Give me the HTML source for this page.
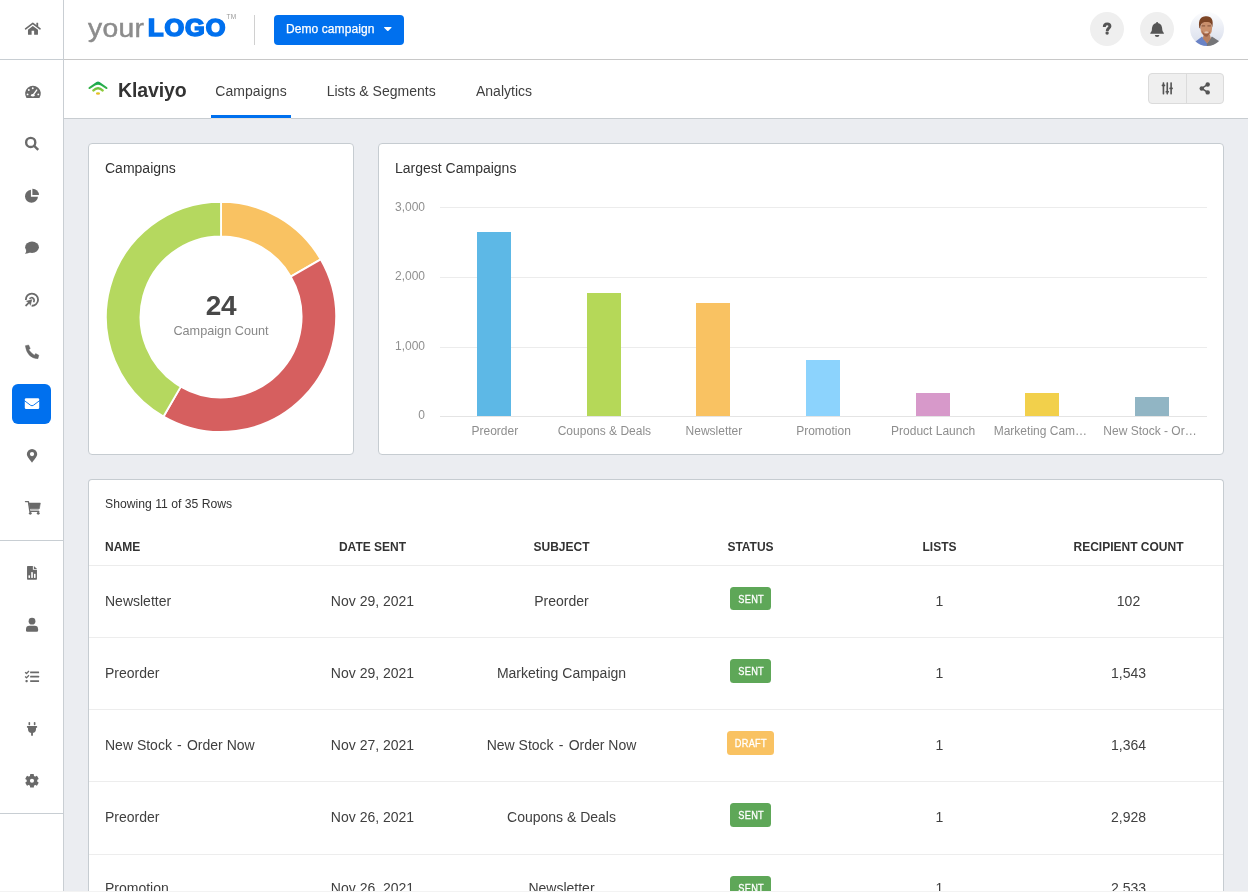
<!DOCTYPE html>
<html lang="en">
<head>
<meta charset="utf-8">
<title>Klaviyo - Campaigns</title>
<style>
*{box-sizing:border-box;margin:0;padding:0}
html,body{width:1248px;height:892px;overflow:hidden;background:#ebedf1}
#sidebar,#topbar,#subbar,main{will-change:transform}
body{font-family:"Liberation Sans",sans-serif;font-size:14px;color:#333;position:relative}
.ic{position:absolute;display:block}
#sidebar{position:absolute;left:0;top:0;width:64px;height:892px;background:#fff;border-right:1px solid #c9ced3}
#sidebar .sep{position:absolute;left:0;width:63px;height:1px;background:#c8ced3}
#sidebar .active{position:absolute;left:12px;top:384px;width:39px;height:40px;border-radius:6px;background:#0070ee}
#topbar{position:absolute;left:64px;top:0;width:1184px;height:60px;background:#fff;border-bottom:1px solid #c8c8c8}
#logo{position:absolute;left:0;top:0;width:190px;height:59px}
#logo span{position:absolute;white-space:nowrap;line-height:1}
#logo .your{left:24px;top:15.7px;font-size:25px;color:#8c8c8c;letter-spacing:.3px;-webkit-text-stroke:.45px #8c8c8c;transform:scaleX(1.13);transform-origin:0 0}
#logo .logo{left:84.3px;top:16.9px;font-size:23.2px;font-weight:bold;color:#0070ee;letter-spacing:.9px;-webkit-text-stroke:1.7px #0070ee;transform:scaleX(1.09);transform-origin:0 0}
#logo .tm{left:162.5px;top:14px;font-size:6.5px;color:#999;letter-spacing:.2px}
#topbar .vsep{position:absolute;left:190px;top:15px;width:1px;height:30px;background:#d0d0d0}
#campaign{position:absolute;left:210px;top:15px;width:130px;height:30px;border-radius:4px;background:#0070ee;color:#fff;font-size:12px;line-height:29px;padding-left:12px;letter-spacing:.08px;-webkit-text-stroke:.25px #fff}
.circ{position:absolute;top:12px;width:34px;height:34px;border-radius:50%;background:#efefef}
#subbar{position:absolute;left:64px;top:60px;width:1184px;height:59px;background:#fff;border-bottom:1px solid #c8cdd1}
#subbar h1{position:absolute;left:54px;top:18.4px;font-size:19.5px;line-height:24px;font-weight:bold;color:#333;letter-spacing:-.1px}
#subbar nav a{position:absolute;top:21px;font-size:14px;line-height:20px;color:#404040;text-decoration:none;white-space:nowrap}
#subbar .ul{position:absolute;left:147px;top:55px;width:80px;height:4px;background:#0070ee;border-bottom:1px solid #e4e1dc}
#tools{position:absolute;left:1084px;top:13px;width:76px;height:31px;border:1px solid #dbdbdb;border-radius:4px;background:#efefef}
#tools i{position:absolute;left:37px;top:0;width:1px;height:29px;background:#dbdbdb}
.card{position:absolute;background:#fff;border:1px solid #c6ccd1;border-radius:4px}
.card h2{position:absolute;left:16px;top:16px;font-size:14px;line-height:16px;font-weight:normal;color:#333}
.grid{position:absolute;left:440px;width:767px;height:1px;background:#ececec}
.grid.base{background:#e4e4e4}
.yl{position:absolute;left:380px;width:45px;text-align:right;font-size:12px;line-height:18px;color:#909090}
.xl{position:absolute;top:422px;width:120px;text-align:center;font-size:12px;line-height:18px;color:#8e8e8e;white-space:nowrap}
.bar{position:absolute;width:34px}
#dc{position:absolute;left:0;top:0}
.num{position:absolute;left:89px;top:289.6px;width:264px;text-align:center;font-size:28px;line-height:32px;font-weight:bold;color:#484848;letter-spacing:-.4px}
.cap{position:absolute;left:89px;top:321.6px;width:264px;text-align:center;font-size:12.7px;line-height:18px;color:#888}
#tcard{left:88px;top:479px;width:1136px;height:440px;border-bottom:none}
#tcard p{position:absolute;left:16px;top:15px;font-size:12.2px;line-height:18px;color:#333}
table{position:absolute;left:0;top:48px;width:1134px;border-collapse:collapse;table-layout:fixed}
th{height:37px;font-size:12px;font-weight:bold;color:#333;text-align:center;border-bottom:1px solid #ececec;vertical-align:middle;padding-top:2px}
td{height:72px;font-size:14px;color:#404040;text-align:center;border-bottom:1px solid #ededed;vertical-align:middle}
tr.r4 td{height:73px;padding-bottom:1px}
tr.r5 td{padding-bottom:3.4px}
th:first-child,td:first-child{text-align:left;padding-left:16px}
.badge{display:inline-block;height:23px;line-height:23px;border-radius:3.5px;font-size:10.6px;color:#fff;position:relative;top:-3px;text-align:center;white-space:nowrap}
.badge b{display:inline-block;font-weight:normal;-webkit-text-stroke:.3px #fff;transform:scaleX(.87);transform-origin:50% 50%;margin:0 -4px;position:relative;top:1px;letter-spacing:.35px;text-indent:.35px}
tr.r2 .badge,tr.r3 .badge,tr.r4 .badge{height:24px;top:-2.5px}
tr.r5 .badge{top:-1px}
.sent{background:#5ea758;width:41px}
.draft{background:#f9c262;width:47px}
#edge{position:absolute;left:0;top:891px;width:1248px;height:1px;background:#f3f3f3}
.hy{padding:0 1.3px}
</style>
</head>
<body>
<aside id="sidebar">
<div class="sep" style="top:59px"></div>
<div class="sep" style="top:540px"></div>
<div class="sep" style="top:813px"></div>
<div class="active"></div>
<svg class="ic" style="left:18px;top:15px" width="30" height="28" viewBox="0 0 956 892"><path fill="none" stroke="#6a6a6a" stroke-width="52" stroke-linecap="round" stroke-linejoin="round" d="M242 440L472 264L702 440"/><rect x="585" y="246" width="58" height="130" rx="8" fill="#6a6a6a"/><path fill="#6a6a6a" d="M318 470L472 352L636 470V615A18 18 0 0 1 618 633H514V505H434V633H336A18 18 0 0 1 318 615Z"/></svg>
<svg class="ic" style="left:18px;top:78px" width="30" height="28" viewBox="0 0 956 892"><path fill="#6a6a6a" d="M270 636A250 250 0 1 1 684 636Z"/><circle cx="345" cy="383" r="30" fill="#fff"/><circle cx="470" cy="325" r="30" fill="#fff"/><circle cx="305" cy="522" r="30" fill="#fff"/><circle cx="647" cy="522" r="30" fill="#fff"/><path fill="none" stroke="#fff" stroke-width="44" stroke-linecap="round" d="M490 530L596 384"/><ellipse cx="472" cy="548" rx="58" ry="38" fill="#fff"/></svg>
<svg class="ic" style="left:18px;top:130px" width="30" height="28" viewBox="0 0 956 892"><circle cx="405" cy="395" r="146" fill="none" stroke="#6a6a6a" stroke-width="76"/><path fill="none" stroke="#6a6a6a" stroke-width="74" d="M515 505L645 635"/></svg>
<svg class="ic" style="left:18px;top:182px" width="30" height="28" viewBox="0 0 956 892"><path fill="#6a6a6a" d="M412 466V250A207 207 0 1 0 636 466Z"/><path fill="#6a6a6a" d="M458 416V213A203 203 0 0 1 668 416Z"/></svg>
<svg class="ic" style="left:18px;top:234px" width="30" height="28" viewBox="0 0 956 892"><ellipse cx="447" cy="420" rx="220" ry="182" fill="#6a6a6a"/><path fill="#6a6a6a" d="M262 500Q270 580 224 628Q320 632 400 575Z"/></svg>
<svg class="ic" style="left:18px;top:286px" width="30" height="28" viewBox="0 0 956 892"><path fill="none" stroke="#6a6a6a" stroke-width="58" d="M250 445A195 195 0 1 1 435 630"/><path fill="none" stroke="#6a6a6a" stroke-width="54" d="M368 405A82 82 0 1 1 492 512"/><path fill="#6a6a6a" stroke="#fff" stroke-width="10" stroke-linejoin="round" d="M462 412L240 480L312 522L218 615L262 660L355 566L400 640Z"/></svg>
<svg class="ic" style="left:18px;top:338px" width="30" height="28" viewBox="0 0 956 892"><path fill="#6a6a6a" stroke="#6a6a6a" stroke-width="14" stroke-linejoin="round" d="M234 246L338 222L390 338L342 378Q412 478 524 546L562 494L664 548L636 658Q292 648 234 246Z"/></svg>
<svg class="ic" style="left:18px;top:442px" width="30" height="28" viewBox="0 0 956 892"><path fill="#6a6a6a" fill-rule="evenodd" d="M447 662C400 590 282 480 282 385A165 165 0 1 1 612 385C612 480 494 590 447 662ZM447 317A68 68 0 1 0 447 453A68 68 0 1 0 447 317Z"/></svg>
<svg class="ic" style="left:18px;top:494px" width="30" height="28" viewBox="0 0 956 892"><path fill="none" stroke="#6a6a6a" stroke-width="42" stroke-linecap="round" stroke-linejoin="round" d="M238 240H332L378 552H665"/><path fill="#6a6a6a" stroke="#6a6a6a" stroke-width="20" stroke-linejoin="round" d="M350 290H712L680 468H378Z"/><rect x="400" y="480" width="262" height="50" fill="#b9b9b9"/><circle cx="392" cy="616" r="44" fill="#6a6a6a"/><circle cx="645" cy="616" r="44" fill="#6a6a6a"/></svg>
<svg class="ic" style="left:18px;top:558px" width="30" height="28" viewBox="0 0 956 892"><path fill="#6a6a6a" d="M310 256H474V378H604V670A22 22 0 0 1 582 692H310A22 22 0 0 1 288 670V278A22 22 0 0 1 310 256Z"/><path fill="#6a6a6a" d="M506 252L608 350H506Z"/><rect x="333" y="548" width="50" height="88" rx="14" fill="#fff"/><rect x="421" y="448" width="52" height="188" rx="14" fill="#fff"/><rect x="509" y="498" width="50" height="138" rx="14" fill="#fff"/></svg>
<svg class="ic" style="left:18px;top:610px" width="30" height="28" viewBox="0 0 956 892"><circle cx="447" cy="355" r="108" fill="#6a6a6a"/><path fill="#6a6a6a" d="M255 650V610A108 108 0 0 1 363 502H532A108 108 0 0 1 640 610V650A42 42 0 0 1 598 692H297A42 42 0 0 1 255 650Z"/></svg>
<svg class="ic" style="left:18px;top:662px" width="30" height="28" viewBox="0 0 956 892"><rect x="386" y="301" width="286" height="58" rx="12" fill="#6a6a6a"/><rect x="386" y="439" width="286" height="58" rx="12" fill="#6a6a6a"/><rect x="386" y="578" width="286" height="58" rx="12" fill="#6a6a6a"/><path fill="none" stroke="#6a6a6a" stroke-width="42" stroke-linejoin="round" d="M228 325L272 367L350 285"/><path fill="none" stroke="#6a6a6a" stroke-width="42" stroke-linejoin="round" d="M228 463L272 505L350 423"/><rect x="238" y="570" width="72" height="72" rx="24" fill="#6a6a6a"/></svg>
<svg class="ic" style="left:18px;top:714px" width="30" height="28" viewBox="0 0 956 892"><rect x="335" y="252" width="52" height="110" rx="24" fill="#6a6a6a"/><rect x="504" y="252" width="52" height="110" rx="24" fill="#6a6a6a"/><path fill="#6a6a6a" d="M300 383H594A16 16 0 0 1 610 399V425A16 16 0 0 1 594 441H574V478A128 128 0 0 1 318 478V441H300A16 16 0 0 1 284 425V399A16 16 0 0 1 300 383Z"/><rect x="418" y="580" width="58" height="112" fill="#6a6a6a"/></svg>
<svg class="ic" style="left:18px;top:766px" width="30" height="28" viewBox="0 0 956 892"><circle cx="445" cy="470" r="118" fill="none" stroke="#6a6a6a" stroke-width="104"/><rect x="383" y="252" width="124" height="90" rx="22" fill="#6a6a6a" transform="rotate(0 445 470)"/><rect x="383" y="252" width="124" height="90" rx="22" fill="#6a6a6a" transform="rotate(60 445 470)"/><rect x="383" y="252" width="124" height="90" rx="22" fill="#6a6a6a" transform="rotate(120 445 470)"/><rect x="383" y="252" width="124" height="90" rx="22" fill="#6a6a6a" transform="rotate(180 445 470)"/><rect x="383" y="252" width="124" height="90" rx="22" fill="#6a6a6a" transform="rotate(240 445 470)"/><rect x="383" y="252" width="124" height="90" rx="22" fill="#6a6a6a" transform="rotate(300 445 470)"/></svg>
<svg class="ic" style="left:8px;top:380px" width="48" height="48" viewBox="0 0 892 892"><rect x="312" y="340" width="268" height="200" rx="24" fill="#fff"/><path fill="none" stroke="#0070ee" stroke-width="17" stroke-linejoin="round" d="M300 380L420 470Q446 488 472 470L592 380"/></svg>
</aside>
<header id="topbar">
<div id="logo"><span class="your">your</span><span class="logo">LOGO</span><span class="tm">TM</span></div>
<div class="vsep"></div>
<div id="campaign">Demo campaign</div>
</header>
<div class="circ" style="left:1090px"></div>
<div class="circ" style="left:1140px"></div>
<svg class="ic" style="left:1184px;top:6px" width="46" height="46" viewBox="0 0 892 892"><defs><clipPath id="avc"><circle cx="447" cy="445" r="330"/></clipPath><linearGradient id="avg" x1="0" y1="0" x2="0" y2="1"><stop offset="0" stop-color="#fcfdfe"/><stop offset="0.5" stop-color="#e9ecf4"/><stop offset="1" stop-color="#d6dcea"/></linearGradient><filter id="avb" x="-20%" y="-20%" width="140%" height="140%"><feGaussianBlur stdDeviation="10"/></filter></defs><g clip-path="url(#avc)"><rect x="100" y="100" width="700" height="700" fill="url(#avg)"/><g filter="url(#avb)"><path fill="#6a83c6" d="M205 800V705L350 590L455 720V800Z"/><path fill="#747478" d="M445 800V720L540 590L690 690V800Z"/><path fill="#b98060" d="M380 560H505L520 630L450 725L365 630Z"/><ellipse cx="432" cy="435" rx="112" ry="152" fill="#c98f6c"/><path fill="#7d4426" d="M296 420C270 260 335 195 430 200C525 195 580 265 548 420C540 340 505 305 430 310C355 305 318 350 316 440Z"/><path fill="#7a4a38" opacity=".75" d="M345 372H410V398H345ZM455 372H520V398H455Z"/><path fill="#9a5f45" d="M350 470C375 565 485 565 510 470C505 545 475 592 432 595C388 592 355 545 350 470Z"/><ellipse cx="435" cy="508" rx="40" ry="13" fill="#e6d2c6"/></g></g></svg>
<svg class="ic" style="left:1088px;top:10px" width="88" height="38" viewBox="0 0 1248 539"><path fill="none" stroke="#555" stroke-width="42" d="M231 242C231 206 250 197 272 197C296 197 311 209 311 230C311 260 272 258 272 300"/><circle cx="271" cy="328" r="24" fill="#555"/></svg>
<svg class="ic" style="left:1088px;top:10px" width="88" height="38" viewBox="0 0 1248 539"><circle cx="980" cy="184" r="15" fill="#555"/><path fill="#555" d="M980 186C1042 186 1052 242 1054 282C1056 306 1078 320 1078 336L882 336C882 320 904 306 906 282C908 242 918 186 980 186Z"/><path fill="#555" d="M948 354H1012A32 30 0 0 1 948 354Z"/></svg>
<svg class="ic" style="left:384.3px;top:27.2px" width="7.6" height="4.2" viewBox="0.0 -896.0 1024.0 576.0" preserveAspectRatio="none" ><path transform="scale(1,-1)" fill="#fff" d="M1024 832q0 -26 -19 -45l-448 -448q-19 -19 -45 -19t-45 19l-448 448q-19 19 -19 45t19 45t45 19h896q26 0 45 -19t19 -45z"/></svg>
<section id="subbar">
<h1>Klaviyo</h1>
<nav><a style="left:151.2px;letter-spacing:.08px">Campaigns</a><a style="left:262.7px">Lists &amp; Segments</a><a style="left:412px">Analytics</a></nav>
<div class="ul"></div>
<div id="tools"><i></i></div>
</section>
<svg class="ic" style="left:1140px;top:66px" width="92" height="46" viewBox="0 0 1248 624"><rect x="307" y="222" width="22" height="164" rx="8" fill="#555"/><rect x="294" y="251" width="48" height="22" rx="6" fill="#555"/><rect x="359" y="222" width="22" height="164" rx="8" fill="#555"/><rect x="346" y="339" width="48" height="22" rx="6" fill="#555"/><rect x="411" y="222" width="22" height="164" rx="8" fill="#555"/><rect x="398" y="292" width="48" height="22" rx="6" fill="#555"/></svg><svg class="ic" style="left:1140px;top:66px" width="92" height="46" viewBox="0 0 1248 624"><path fill="none" stroke="#555" stroke-width="21" d="M918 250L838 305L918 358"/><circle cx="918" cy="250" r="30" fill="#555"/><circle cx="838" cy="305" r="30" fill="#555"/><circle cx="918" cy="358" r="30" fill="#555"/></svg>
<svg class="ic" style="left:82px;top:74px" width="32" height="28" viewBox="0 0 1019 892"><defs><linearGradient id="kg1" x1="0" y1="0" x2="0" y2="1"><stop offset="0" stop-color="#12a650"/><stop offset="1" stop-color="#3bb549"/></linearGradient><linearGradient id="kg2" x1="0" y1="0" x2="0" y2="1"><stop offset="0" stop-color="#5dbb46"/><stop offset="1" stop-color="#9bd03a"/></linearGradient><linearGradient id="kg3" x1="0" y1="0" x2="0" y2="1"><stop offset="0" stop-color="#c9cc2a"/><stop offset="0.6" stop-color="#ecc21a"/><stop offset="1" stop-color="#f7a24a"/></linearGradient></defs><path fill="url(#kg1)" d="M510 238Q530 238 560 258L800 420Q822 440 806 466Q786 490 756 472L600 365Q510 315 420 365L262 472Q232 490 212 466Q196 440 218 420L460 258Q490 238 510 238Z"/><path fill="url(#kg2)" d="M510 418Q600 420 690 500Q706 520 690 545Q666 575 636 555Q570 495 510 495Q450 495 384 555Q354 575 330 545Q314 520 330 500Q420 420 510 418Z"/><ellipse cx="510" cy="622" rx="66" ry="40" fill="url(#kg3)"/></svg>
<main>
<section class="card" style="left:88px;top:143px;width:266px;height:312px"><h2>Campaigns</h2></section>
<svg id="dc" width="1248" height="892" viewBox="0 0 1248 892">
<path d="M221.05 201.80A115.1 115.1 0 0 1 320.73 259.35L290.77 276.65A80.5 80.5 0 0 0 221.05 236.40Z" fill="#f9c262" stroke="#fff" stroke-width="1.9" stroke-linejoin="round"/>
<path d="M320.73 259.35A115.1 115.1 0 0 1 163.50 416.58L180.80 386.62A80.5 80.5 0 0 0 290.77 276.65Z" fill="#d65f5f" stroke="#fff" stroke-width="1.9" stroke-linejoin="round"/>
<path d="M163.50 416.58A115.1 115.1 0 0 1 221.05 201.80L221.05 236.40A80.5 80.5 0 0 0 180.80 386.62Z" fill="#b5d85f" stroke="#fff" stroke-width="1.9" stroke-linejoin="round"/>
</svg>
<div class="num">24</div>
<div class="cap">Campaign Count</div>
<section class="card" style="left:378px;top:143px;width:846px;height:312px"><h2>Largest Campaigns</h2></section>
<div class="grid" style="top:207px"></div>
<div class="grid" style="top:277px"></div>
<div class="grid" style="top:347px"></div>
<div class="grid base" style="top:416px"></div>
<div class="yl" style="top:198px">3,000</div>
<div class="yl" style="top:267px">2,000</div>
<div class="yl" style="top:337px">1,000</div>
<div class="yl" style="top:406px">0</div>
<div class="bar" style="left:477px;top:231.8px;height:184.2px;background:#5db8e6"></div>
<div class="xl" style="left:434.8px">Preorder</div>
<div class="bar" style="left:587px;top:292.8px;height:123.2px;background:#b5d858"></div>
<div class="xl" style="left:544.4px">Coupons &amp; Deals</div>
<div class="bar" style="left:696px;top:302.8px;height:113.2px;background:#f9c262"></div>
<div class="xl" style="left:653.9px">Newsletter</div>
<div class="bar" style="left:806px;top:359.8px;height:56.2px;background:#8cd3fd"></div>
<div class="xl" style="left:763.5px">Promotion</div>
<div class="bar" style="left:916px;top:393.1px;height:22.9px;background:#d799ca"></div>
<div class="xl" style="left:873.1px">Product Launch</div>
<div class="bar" style="left:1025px;top:393.1px;height:22.9px;background:#f2d04b"></div>
<div class="xl" style="left:980.4px">Marketing Cam…</div>
<div class="bar" style="left:1135px;top:396.8px;height:19.2px;background:#91b5c4"></div>
<div class="xl" style="left:1090.0px">New Stock - Or…</div>
<section class="card" id="tcard">
<p>Showing 11 of 35 Rows</p>
<table>
<thead><tr><th>NAME</th><th>DATE SENT</th><th>SUBJECT</th><th>STATUS</th><th>LISTS</th><th>RECIPIENT COUNT</th></tr></thead>
<tbody>
<tr class="r1"><td>Newsletter</td><td>Nov 29, 2021</td><td>Preorder</td><td><span class="badge sent"><b>SENT</b></span></td><td>1</td><td>102</td></tr>
<tr class="r2"><td>Preorder</td><td>Nov 29, 2021</td><td>Marketing Campaign</td><td><span class="badge sent"><b>SENT</b></span></td><td>1</td><td>1,543</td></tr>
<tr class="r3"><td>New Stock <span class="hy">-</span> Order Now</td><td>Nov 27, 2021</td><td>New Stock <span class="hy">-</span> Order Now</td><td><span class="badge draft"><b>DRAFT</b></span></td><td>1</td><td>1,364</td></tr>
<tr class="r4"><td>Preorder</td><td>Nov 26, 2021</td><td>Coupons &amp; Deals</td><td><span class="badge sent"><b>SENT</b></span></td><td>1</td><td>2,928</td></tr>
<tr class="r5"><td>Promotion</td><td>Nov 26, 2021</td><td>Newsletter</td><td><span class="badge sent"><b>SENT</b></span></td><td>1</td><td>2,533</td></tr>
</tbody>
</table>
</section>
</main>
<div id="edge"></div>
</body>
</html>
